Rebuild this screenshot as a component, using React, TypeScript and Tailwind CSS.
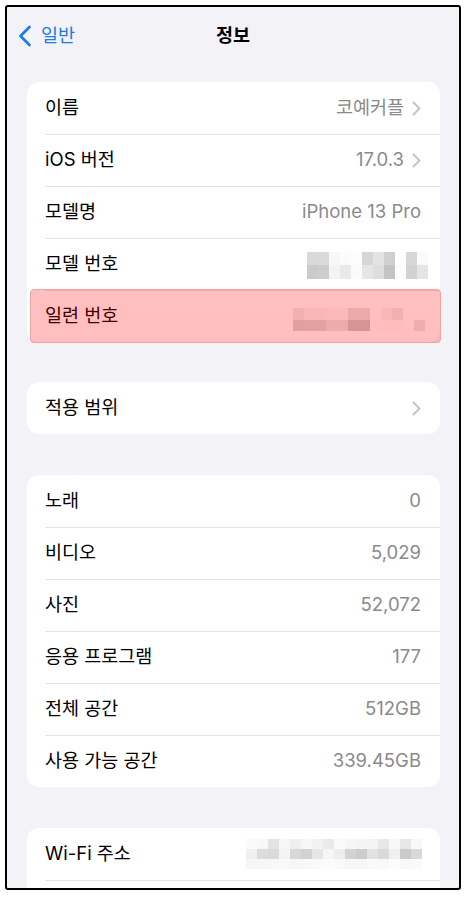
import React from "react";

type Row = {
  label: string;
  value?: string;
  chevron?: boolean;
  mosaic?: string[][];
  highlight?: boolean;
};

const modelMosaic = [
  ["#d9d9d9", "#dadada", "#f7f7f7", "#fbfbfb", "#fdfdfd", "#d6d6d6", "#e3e3e3", "#cfcfcf", "#fefefe", "#d7d7d7", "#fafafa"],
  ["#cbcbcb", "#cdcdcd", "#f4f4f4", "#e9e9e9", "#fbfbfb", "#e6e6e6", "#dedede", "#c3c3c3", "#fcfcfc", "#d2d2d2", "#e4e4e4"],
];

const serialMosaic = [
  ["#ebebeb", "#f5f5f5", "#f5f5f5", "#f8f8f8", "#f8f8f8", "#e3e3e3", "#e3e3e3", "#ffffff", "#f5f5f5", "#ebebeb", "#ffffff", "#ffffff"],
  ["#d5d5d5", "#d8d8d8", "#d8d8d8", "#e5e5e5", "#e5e5e5", "#c7c7c7", "#c7c7c7", "#fdfdfd", "#fcfcfc", "#fcfcfc", "#ffffff", "#e7e7e7"],
];

const wifiMosaic = [
  ["#fafafa", "#f8f8f8", "#e3e3e3", "#f6f6f6", "#efefef", "#f6f6f6", "#f2f2f2", "#eaeaea", "#fafafa", "#f6f6f6", "#f4f4f4", "#f3f3f3", "#e7e7e7", "#f8f8f8", "#e7e7e7", "#f8f8f8"],
  ["#f0f0f0", "#dcdcdc", "#dadada", "#f3f3f3", "#d8d8d8", "#d2d2d2", "#e6e6e6", "#f6f6f6", "#eeeeee", "#d3d3d3", "#cccccc", "#e2e2e2", "#dadada", "#f0f0f0", "#cbcbcb", "#d8d8d8"],
  ["#f6f6f6", "#f7f7f7", "#f8f8f8", "#f9f9f9", "#f7f7f7", "#f8f8f8", "#fafafa", "#fcfcfc", "#fafafa", "#f7f7f7", "#f7f7f7", "#fafafa", "#f9f9f9", "#fcfcfc", "#f8f8f8", "#fafafa"],
];

const groups: Row[][] = [
  [
    { label: "이름", value: "코예커플", chevron: true },
    { label: "iOS 버전", value: "17.0.3", chevron: true },
    { label: "모델명", value: "iPhone 13 Pro" },
    { label: "모델 번호", mosaic: modelMosaic },
    { label: "일련 번호", mosaic: serialMosaic, highlight: true },
  ],
  [{ label: "적용 범위", chevron: true }],
  [
    { label: "노래", value: "0" },
    { label: "비디오", value: "5,029" },
    { label: "사진", value: "52,072" },
    { label: "응용 프로그램", value: "177" },
    { label: "전체 공간", value: "512GB" },
    { label: "사용 가능 공간", value: "339.45GB" },
  ],
  [
    { label: "Wi-Fi 주소", mosaic: wifiMosaic },
    { label: "" },
  ],
];

function Mosaic({ cells, h }: { cells: string[][]; h: number }) {
  return (
    <div className="flex flex-col">
      {cells.map((row, i) => (
        <div key={i} className="flex">
          {row.map((c, j) => (
            <div key={j} className="w-[11px]" style={{ backgroundColor: c, height: h }} />
          ))}
        </div>
      ))}
    </div>
  );
}

function Chevron() {
  return (
    <svg width="9" height="15" viewBox="0 0 9 15" fill="none" className="ml-[8px]">
      <path d="M1.5 1.5 L7.5 7.5 L1.5 13.5" stroke="#c4c4c7" strokeWidth="2" strokeLinecap="round" strokeLinejoin="round" />
    </svg>
  );
}

function ListRow({ row, first }: { row: Row; first: boolean }) {
  const isWifi = row.label === "Wi-Fi 주소";
  return (
    <div className="relative flex h-[52px] items-center pl-[18px]">
      {!first && <div className="absolute left-[18px] right-0 top-0 h-px bg-[#e3e3e8]" />}
      <span className="text-[18.5px] text-black">{row.label}</span>
      <div className="ml-auto flex items-center pr-[19px]">
        {row.value && <span className="text-[18.5px] text-[#8a8a8e]">{row.value}</span>}
        {row.mosaic && (
          <div className={isWifi ? "-mr-[1px]" : row.highlight ? "-mr-[4px] mt-[7px]" : "-mr-[7px] mt-[2px]"}>
            <Mosaic cells={row.mosaic} h={isWifi ? 10 : row.highlight ? 11.5 : 13.5} />
          </div>
        )}
        {row.chevron && <Chevron />}
      </div>
      {row.highlight && (
        <div className="absolute -bottom-[1px] -right-[1px] -top-[1px] left-[3px] rounded-[4px] border border-[#f0a4a4] bg-[#ff0000]/25" />
      )}
    </div>
  );
}

export default function App() {
  return (
    <div
      className="h-[897px] w-[466px] bg-white px-[5px] pt-[5px]"
      style={{ fontFamily: 'Inter, "Noto Sans CJK KR", sans-serif' }}
    >
      <div className="h-[885px] overflow-hidden rounded-[3px] border-2 border-black bg-[#f2f2f7]">
        {/* Nav bar */}
        <div className="relative flex h-[58px] items-center justify-center">
          <div className="absolute left-[11px] top-0 flex h-full items-center gap-[9px]">
            <svg width="14" height="22" viewBox="0 0 14 22" fill="none">
              <path d="M11.5 2 L2.5 11 L11.5 20" stroke="#1d7ce8" strokeWidth="2.8" strokeLinecap="round" strokeLinejoin="round" />
            </svg>
            <span className="text-[18.5px] text-[#1d7ce8]">일반</span>
          </div>
          <span className="text-[18.5px] font-bold text-black">정보</span>
        </div>

        {/* Groups */}
        <div className="mt-[17px] flex flex-col pl-[20px] pr-[19px]">
          {groups.map((group, gi) => (
            <div
              key={gi}
              className={
                gi === 0
                  ? "rounded-[12px] bg-white"
                  : gi === 1
                    ? "mt-[40px] rounded-[12px] bg-white"
                    : gi === 2
                      ? "mt-[41px] rounded-[12px] bg-white"
                      : "mt-[41px] rounded-t-[12px] bg-white"
              }
            >
              {group.map((row, ri) => (
                <ListRow key={row.label + ri} row={row} first={ri === 0} />
              ))}
            </div>
          ))}
        </div>
      </div>
    </div>
  );
}
